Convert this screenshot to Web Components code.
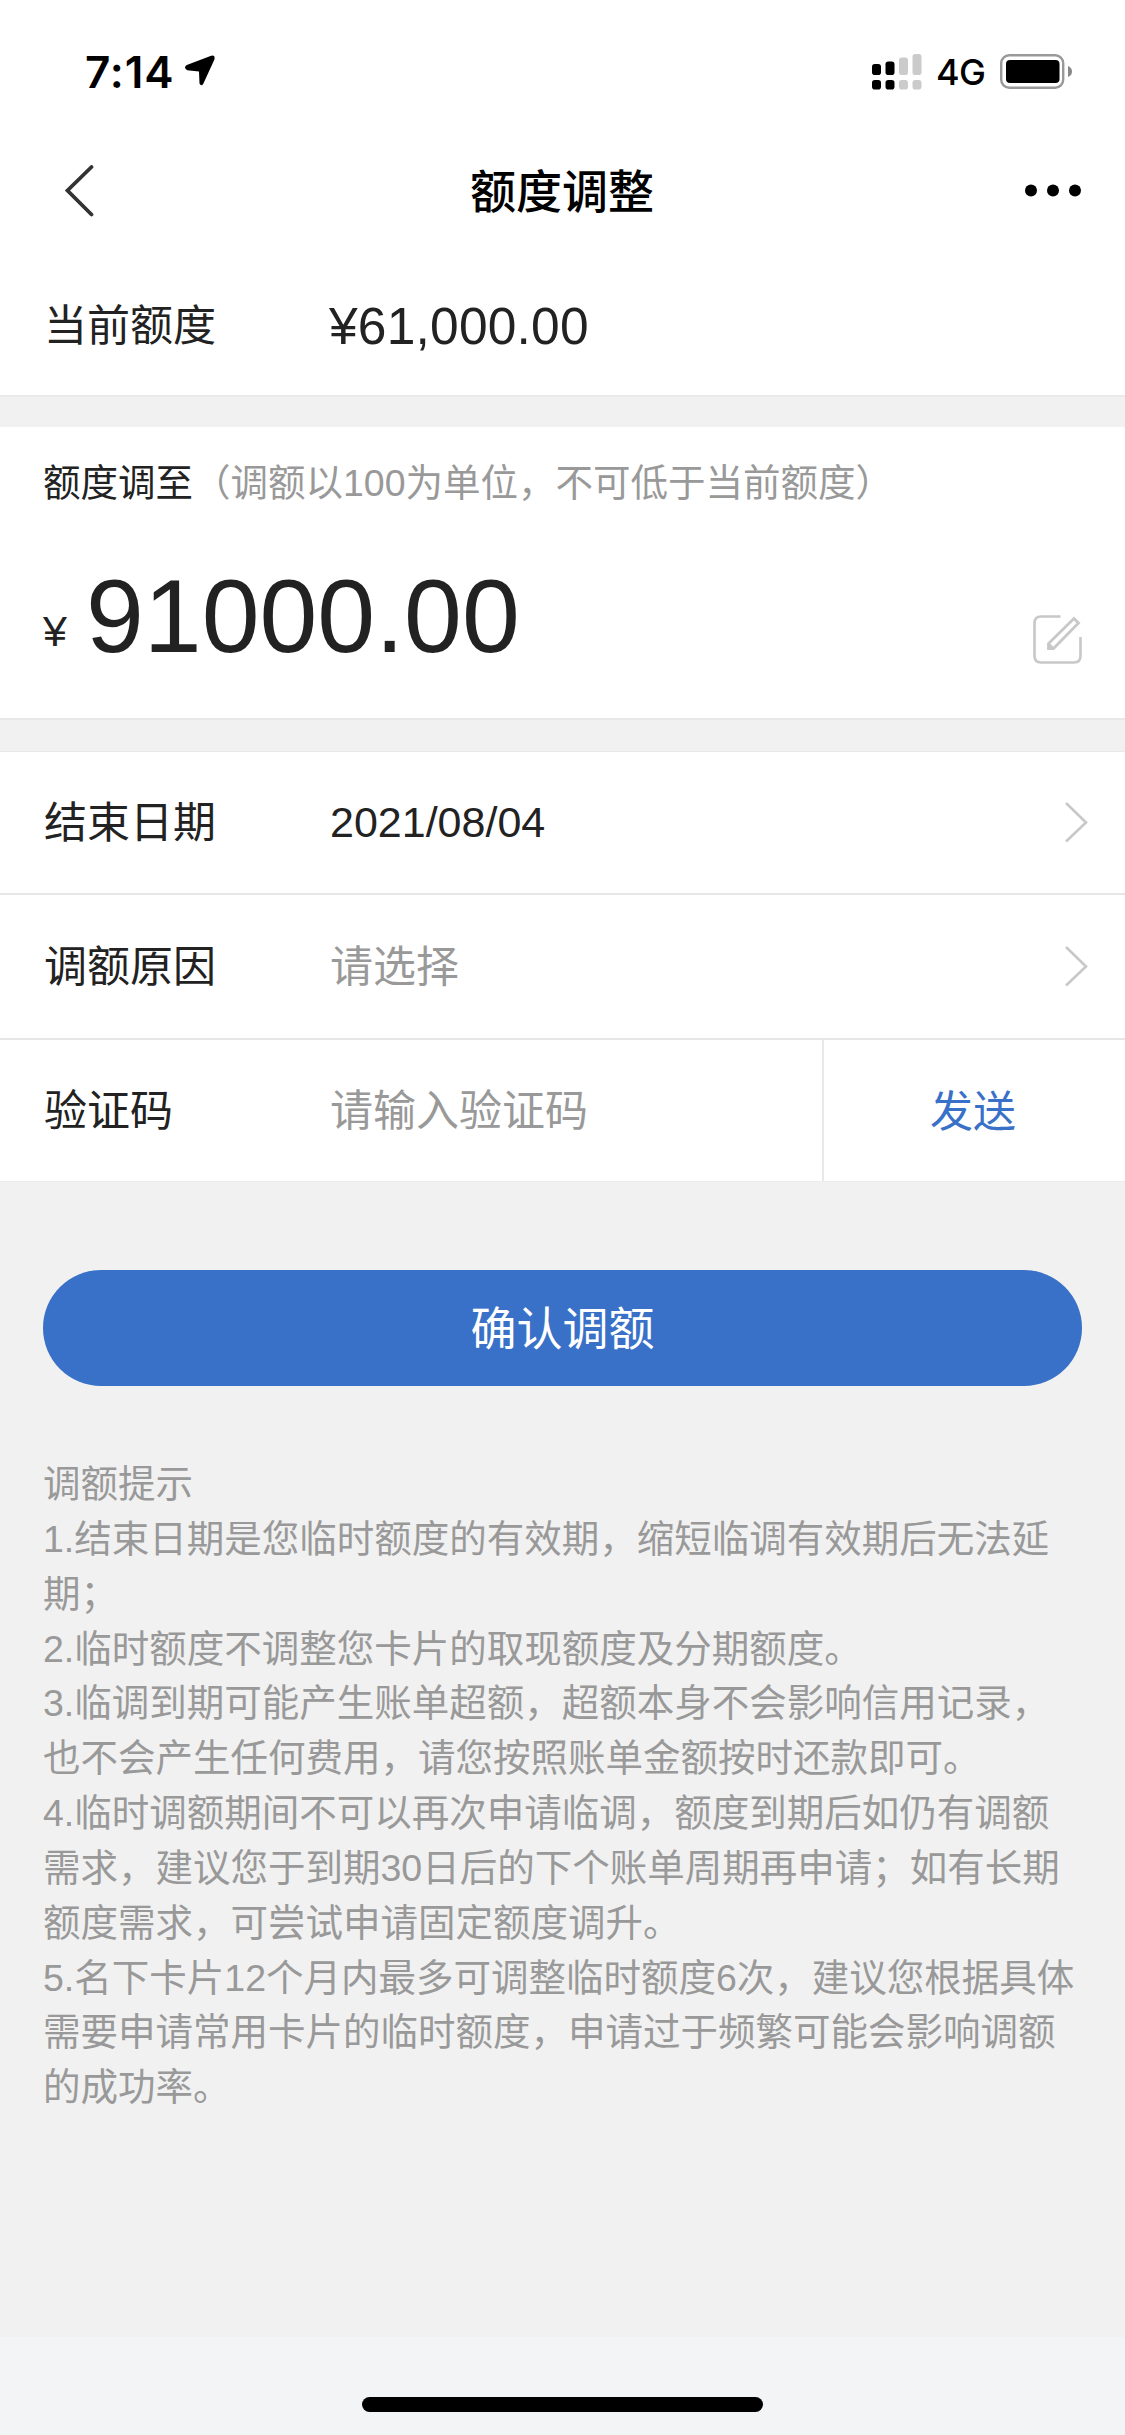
<!DOCTYPE html>
<html lang="zh-CN">
<head>
<meta charset="utf-8">
<title>额度调整</title>
<style>
html,body{margin:0;padding:0}
body{width:1125px;height:2435px;background:#f1f1f1;overflow:hidden;color:#222;font-family:"Liberation Sans","Noto Sans CJK SC",sans-serif;font-size:43px}
</style>
</head>
<body>
<limit-page></limit-page>
<script>
const define = (name, html) => {
  const t = document.createElement('template');
  t.innerHTML = html;
  customElements.define(name, class extends HTMLElement {
    constructor() {
      super();
      this.attachShadow({ mode: 'open' }).append(t.content.cloneNode(true));
    }
  });
};

define('status-bar', `
<style>
:host{display:flex;justify-content:space-between;height:144px;box-sizing:border-box;padding:46px 52px 0 85px;color:#000;font-family:Inter,sans-serif}
div{display:flex;height:52px;align-items:center}
.time{font-size:44px;font-weight:600;line-height:52px;letter-spacing:.9px;width:99px;white-space:nowrap}
.net{font-size:36px;font-weight:500;line-height:52px;margin-left:14px;width:63px;letter-spacing:-.6px}
svg{display:block}
</style>
<div><span class="time">7:14</span>
<svg width="32" height="32" viewBox="0 0 32 32" style="margin-top:-2px"><path d="M2.800 10 26.500 .9Q31.800-.5 30.300 4.800L19.300 28.700Q17.200 32 15.500 28.500L15 16.500 3.200 15.200Q-1 12.600 2.800 10Z" fill="#000"/></svg></div>
<div>
<svg width="50" height="36" viewBox="0 0 50 36"><g fill="#000"><rect x="0" y="10" width="9" height="11" rx="2.8"/><rect x="13.5" y="7.5" width="9" height="13.5" rx="2.8"/><rect x="0" y="26" width="9" height="9.5" rx="2.8"/><rect x="13.5" y="26" width="9" height="9.5" rx="2.8"/></g><g fill="#cbcbcb"><rect x="27" y="3.5" width="9" height="17.5" rx="2.8"/><rect x="40.500" y="0" width="9" height="21" rx="2.8"/><rect x="27" y="26" width="9" height="9.500" rx="2.8"/><rect x="40.500" y="26" width="9" height="9.500" rx="2.8"/></g></svg>
<span class="net">4G</span>
<svg width="74" height="36" viewBox="0 0 74 36"><rect x="2.200" y="1.200" width="62" height="32.600" rx="8" fill="none" stroke="#999" stroke-width="2.400"/><rect x="7" y="6" width="53.500" height="23" rx="4" fill="#000"/><path d="M69 12Q73 13.500 73 17.500T69 23Z" fill="#888"/></svg>
</div>`);

define('nav-bar', `
<style>
:host{display:flex;align-items:center;justify-content:space-between;height:94px;padding:0 43px 0 63px;font-family:"Noto Sans CJK SC",sans-serif}
svg{display:block}
h1{margin:-6px 0 0;font-size:46px;line-height:66px;font-weight:500;color:#000}
.l,.r{width:120px}
.r{display:flex;justify-content:flex-end}
.l{margin-right:-21px}
</style>
<div class="l"><svg width="32" height="52" viewBox="0 0 32 52"><path d="M28.500 2 4.500 25.500 28.500 49.500" fill="none" stroke="#333" stroke-width="3.800" stroke-linecap="round"/></svg></div>
<h1><slot></slot></h1>
<div class="r"><svg width="58" height="14" viewBox="0 0 58 14"><circle cx="7" cy="6.500" r="6"/><circle cx="29" cy="6.500" r="6"/><circle cx="51" cy="6.500" r="6"/></svg></div>`);

define('form-row', `
<style>
:host{display:flex;align-items:stretch;box-sizing:border-box;height:145px;background:#fff;border-bottom:2px solid #e6e6e6;padding-left:44px}
.k{width:286px;flex:none;display:flex;align-items:center;font-size:43px;line-height:64px}
.v{flex:1;display:flex;align-items:center;font-size:43px;line-height:64px}
.e{display:flex;align-items:center}
</style>
<div class="k"><slot name="label"></slot></div><div class="v"><slot></slot></div><div class="e"><slot name="end"></slot></div>`);

define('chevron-icon', `
<style>:host{display:block;margin-right:37px;margin-top:-1px}svg{display:block}</style>
<svg width="24" height="44" viewBox="0 0 24 44"><path d="M2 3 22 22.500 2 41.500" fill="none" stroke="#c8c8c8" stroke-width="2.600"/></svg>`);

define('edit-icon', `
<style>:host{display:block}svg{display:block}</style>
<svg width="52" height="52" viewBox="0 0 52 52" fill="none" stroke="#c8c8c8" stroke-width="2.600"><path d="M28.500 2.500H9Q2.500 2.500 2.500 9V42Q2.500 48.500 9 48.500H42Q48.500 48.500 48.500 42V23"/><path d="M42 4.500 46.500 9 21.500 34.500H16.500V29.500Z" stroke-width="2.800"/><path d="M16.500 28 23 34.500H16.500Z" fill="#c8c8c8" stroke="none"/></svg>`);

define('amount-panel', `
<style>
:host{display:block;box-sizing:border-box;height:293px;background:#fff;border-bottom:2px solid #e8e8e8;padding:28px 41px 0 43px}
.t{font-size:37.500px;line-height:56px;white-space:nowrap}
.t span{color:#999}
.a{display:flex;align-items:baseline;margin-top:45px;height:120px}
.y{font-size:43px;line-height:60px;width:43px;position:relative;top:-6px}
.n{font-size:104px;line-height:120px;flex:1}
edit-icon{align-self:flex-end;margin-bottom:10px}
</style>
<div class="t">额度调至<span>（调额以100为单位，不可低于当前额度）</span></div>
<div class="a"><span class="y">¥</span><span class="n">91000.00</span><edit-icon></edit-icon></div>`);

define('primary-button', `
<style>
:host{display:block;margin:88px 43px 0 43px}
button{display:block;width:100%;height:116px;border:0;border-radius:58px;background:#3970c8;color:#fff;font:46px/110px "Noto Sans CJK SC",sans-serif;padding:0 0 6px}
</style><button><slot></slot></button>`);

define('tips-block', `
<style>
:host{display:block;padding:71px 0 0 43px;color:#999;font-size:37.500px;line-height:54.850px;white-space:nowrap}
</style><slot></slot>`);

define('home-indicator', `
<style>
:host{display:flex;justify-content:center;box-sizing:border-box;height:98px;padding-top:60px;background:#f3f4f6}
i{display:block;width:401px;height:15px;border-radius:8px;background:#000}
</style><i></i>`);

define('limit-page', `
<style>
:host{display:flex;flex-direction:column;height:2435px}
header{background:#fff}
.cur{height:159px;border-bottom-color:#eaeaea;padding-top:18px}
.amt{font-size:51.500px;letter-spacing:.2px;margin-left:-1px}
.gap{height:30px;flex:none}
.gap2{height:31px;flex:none;border-bottom:1px solid #e8e8e8}
.ph{color:#999}
.date{margin-top:-2px}
.send{display:flex;align-items:center;justify-content:center;box-sizing:border-box;width:303px;height:141px;padding:0 3px 5px 0;border-left:2px solid #e8e8e8;color:#3970c8}
.last{height:142px;border-bottom:1px solid #ebebeb}
tips-block{flex:1}
</style>
<header><status-bar></status-bar><nav-bar>额度调整</nav-bar></header>
<form-row class="cur"><span slot="label">当前额度</span><span class="amt">¥61,000.00</span></form-row>
<div class="gap"></div>
<amount-panel></amount-panel>
<div class="gap2"></div>
<form-row style="height:143px"><span slot="label">结束日期</span><span class="date">2021/08/04</span><chevron-icon slot="end"></chevron-icon></form-row>
<form-row><span slot="label">调额原因</span><span class="ph">请选择</span><chevron-icon slot="end"></chevron-icon></form-row>
<form-row class="last"><span slot="label">验证码</span><span class="ph">请输入验证码</span><span class="send" slot="end">发送</span></form-row>
<primary-button>确认调额</primary-button>
<tips-block>调额提示<br>1.结束日期是您临时额度的有效期，缩短临调有效期后无法延<br>期；<br>2.临时额度不调整您卡片的取现额度及分期额度。<br>3.临调到期可能产生账单超额，超额本身不会影响信用记录，<br>也不会产生任何费用，请您按照账单金额按时还款即可。<br>4.临时调额期间不可以再次申请临调，额度到期后如仍有调额<br>需求，建议您于到期30日后的下个账单周期再申请；如有长期<br>额度需求，可尝试申请固定额度调升。<br>5.名下卡片12个月内最多可调整临时额度6次，建议您根据具体<br>需要申请常用卡片的临时额度，申请过于频繁可能会影响调额<br>的成功率。</tips-block>
<home-indicator></home-indicator>`);
</script>
</body>
</html>
